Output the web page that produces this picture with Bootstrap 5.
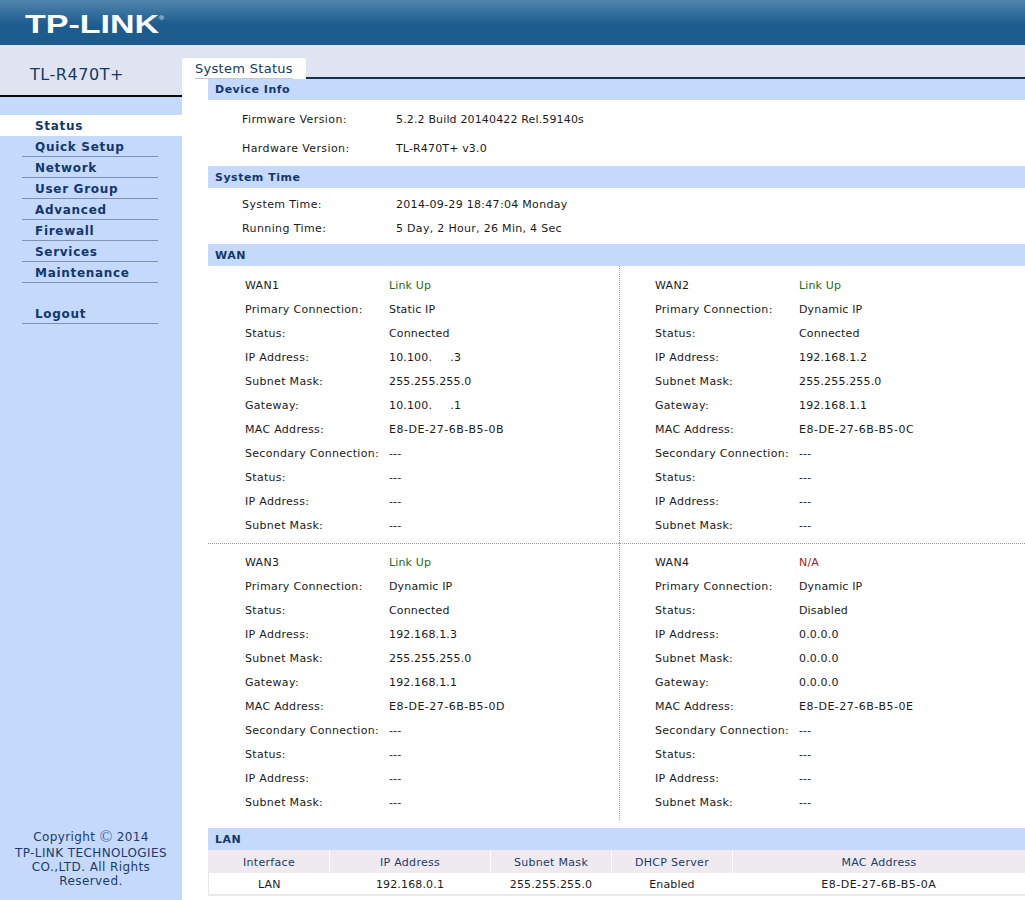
<!DOCTYPE html>
<html lang="en">
<head>
<meta charset="utf-8">
<title>TP-LINK TL-R470T+</title>
<link href="https://cdn.jsdelivr.net/npm/bootstrap@5.3.0/dist/css/bootstrap.min.css" rel="stylesheet">
<style>
html, body { height: 900px; overflow: hidden; }
body { font-family: "DejaVu Sans", Verdana, sans-serif; font-size: 11px; line-height: 14px; letter-spacing: .15px; color: #1a1a1a; background: #fff; }
.top-bar { height: 45px; background: linear-gradient(#5085ae, #1c5c8e 55%, #1d5b8d); padding: 11px 0 0 25px; }
.logo-word { font-family: "Liberation Sans", Arial, sans-serif; font-weight: 700; font-size: 25px; line-height: 27px; letter-spacing: 0; color: #fff; display: inline-block; transform: scaleX(1.36); transform-origin: left; }
.logo-word sup { font-size: 5px; font-weight: 400; top: -2.6em; margin-left: 0; }
.main-area { height: 855px; }
.side-panel { width: 182px; background: #c4d9fc; }
.model-box { height: 52px; background: #e0e4f0; border-bottom: 2px solid #0a0a0a; padding-top: 21px; padding-left: 30px; font-size: 16px; line-height: 18px; letter-spacing: .55px; color: #123a66; }
.menu-list { margin-top: 18px; }
.menu-item { height: 21px; line-height: 23px; margin-left: 22px; width: 136px; padding-left: 13px; font-weight: 700; font-size: 12px; letter-spacing: .7px; color: #14376b; border-bottom: 1px solid #7f93ad; text-decoration: none; display: block; }
.menu-item.is-current { background: #fff; margin-left: 0; width: 182px; padding-left: 35px; border-bottom: 0; }
.menu-gap { height: 20px; }
.copy-note { margin-top: auto; padding: 0 6px 12px; text-align: center; font-size: 12px; line-height: 14px; letter-spacing: .4px; color: #1c3a6e; }
.copy-first { margin-bottom: 2px; }
.copy-mark { font-size: 17px; line-height: 10px; font-family: "Liberation Serif", serif; color: #48689a; vertical-align: -1px; letter-spacing: 0; }
.content-pane { min-width: 0; }
.tab-strip { height: 34px; background: #e0e4f0; border-bottom: 2px solid #123050; padding-top: 13px; }
.tab-label { display: block; width: 124px; height: 21px; background: #fff; border-radius: 3px 3px 0 0; padding: 3px 0 0 13px; }
.tab-text { display: inline-block; height: 18px; font-size: 13px; line-height: 15px; letter-spacing: .3px; color: #123a66; border-bottom: 1px solid #c8c8c8; }
.section-wrap { margin-left: 26px; }
.section-bar { height: 22px; background: #c4d9fc; padding-left: 7px; line-height: 23px; font-weight: 700; color: #14376b; letter-spacing: .5px; }
.section-bar.bar-first { height: 21px; line-height: 21px; }
.info-row { display: flex; height: 24px; align-items: center; }
.info-key { flex: 0 0 154px; letter-spacing: .4px; }
.dev-rows { padding: 5px 0 3px 34px; }
.dev-rows .info-row { height: 29px; }
.time-rows { padding: 5px 0 3px 34px; }
.time-rows .info-row > span:last-child { letter-spacing: .3px; }
.wan-grid { display: grid; grid-template-columns: 411px 1fr; }
.wan-cell { padding: 8px 0 0 37px; height: 277px; }
.wan-cell.cell-right { border-left: 1px dotted #999; padding-left: 35px; }
.wan-cell.cell-low { border-top: 1px dotted #999; padding-top: 7px; }
.wan-key { flex: 0 0 144px; white-space: nowrap; letter-spacing: .3px; }
.mac-val { letter-spacing: .5px; }
.st-up { color: #1c6b1c; }
.st-down { color: #b01818; }
.lan-gap { margin-top: 8px; }
.lan-table { width: 100%; table-layout: fixed; border-collapse: collapse; text-align: center; }
.lan-table th { font-weight: 400; letter-spacing: .3px; background: #eeeaf0; color: #1c3a6e; height: 23px; padding: 2px 0 0; border-left: 1px solid #fff; }
.lan-table th:first-child { border-left: 1px solid #eeeaf0; }
.lan-table td { height: 22px; padding: 2px 0 0; border-bottom: 2px solid #e8e8ec; }
.lan-table td:first-child { border-left: 1px solid #e8e8ec; }
</style>
</head>
<body>
<header class="top-bar"><span class="logo-word">TP-LINK<sup>®</sup></span></header>
<div class="d-flex main-area">
  <aside class="side-panel d-flex flex-column flex-shrink-0">
    <div class="model-box">TL-R470T+</div>
    <nav class="menu-list">
      <a class="menu-item is-current" href="#">Status</a>
      <a class="menu-item" href="#">Quick Setup</a>
      <a class="menu-item" href="#">Network</a>
      <a class="menu-item" href="#">User Group</a>
      <a class="menu-item" href="#">Advanced</a>
      <a class="menu-item" href="#">Firewall</a>
      <a class="menu-item" href="#">Services</a>
      <a class="menu-item" href="#">Maintenance</a>
      <div class="menu-gap"></div>
      <a class="menu-item" href="#">Logout</a>
    </nav>
    <div class="copy-note"><div class="copy-first">Copyright <span class="copy-mark">©</span> 2014</div>TP-LINK TECHNOLOGIES<br>CO.,LTD. All Rights<br>Reserved.</div>
  </aside>
  <main class="content-pane flex-grow-1">
    <div class="tab-strip"><div class="tab-label"><span class="tab-text">System Status</span></div></div>
    <div class="section-wrap">
      <div class="section-bar bar-first">Device Info</div>
      <div class="dev-rows">
        <div class="info-row"><span class="info-key">Firmware Version:</span><span>5.2.2 Build 20140422 Rel.59140s</span></div>
        <div class="info-row"><span class="info-key">Hardware Version:</span><span>TL-R470T+ v3.0</span></div>
      </div>
      <div class="section-bar">System Time</div>
      <div class="time-rows">
        <div class="info-row"><span class="info-key">System Time:</span><span>2014-09-29 18:47:04 Monday</span></div>
        <div class="info-row"><span class="info-key">Running Time:</span><span>5 Day, 2 Hour, 26 Min, 4 Sec</span></div>
      </div>
      <div class="section-bar">WAN</div>
      <div class="wan-grid">
        <div class="wan-cell">
          <div class="info-row"><span class="wan-key">WAN1</span><span class="st-up">Link Up</span></div>
          <div class="info-row"><span class="wan-key">Primary Connection:</span><span>Static IP</span></div>
          <div class="info-row"><span class="wan-key">Status:</span><span>Connected</span></div>
          <div class="info-row"><span class="wan-key">IP Address:</span><span>10.100.&nbsp;&nbsp;&nbsp;&nbsp;&nbsp;.3</span></div>
          <div class="info-row"><span class="wan-key">Subnet Mask:</span><span>255.255.255.0</span></div>
          <div class="info-row"><span class="wan-key">Gateway:</span><span>10.100.&nbsp;&nbsp;&nbsp;&nbsp;&nbsp;.1</span></div>
          <div class="info-row"><span class="wan-key">MAC Address:</span><span class="mac-val">E8-DE-27-6B-B5-0B</span></div>
          <div class="info-row"><span class="wan-key">Secondary Connection:</span><span>---</span></div>
          <div class="info-row"><span class="wan-key">Status:</span><span>---</span></div>
          <div class="info-row"><span class="wan-key">IP Address:</span><span>---</span></div>
          <div class="info-row"><span class="wan-key">Subnet Mask:</span><span>---</span></div>
        </div>
        <div class="wan-cell cell-right">
          <div class="info-row"><span class="wan-key">WAN2</span><span class="st-up">Link Up</span></div>
          <div class="info-row"><span class="wan-key">Primary Connection:</span><span>Dynamic IP</span></div>
          <div class="info-row"><span class="wan-key">Status:</span><span>Connected</span></div>
          <div class="info-row"><span class="wan-key">IP Address:</span><span>192.168.1.2</span></div>
          <div class="info-row"><span class="wan-key">Subnet Mask:</span><span>255.255.255.0</span></div>
          <div class="info-row"><span class="wan-key">Gateway:</span><span>192.168.1.1</span></div>
          <div class="info-row"><span class="wan-key">MAC Address:</span><span class="mac-val">E8-DE-27-6B-B5-0C</span></div>
          <div class="info-row"><span class="wan-key">Secondary Connection:</span><span>---</span></div>
          <div class="info-row"><span class="wan-key">Status:</span><span>---</span></div>
          <div class="info-row"><span class="wan-key">IP Address:</span><span>---</span></div>
          <div class="info-row"><span class="wan-key">Subnet Mask:</span><span>---</span></div>
        </div>
        <div class="wan-cell cell-low">
          <div class="info-row"><span class="wan-key">WAN3</span><span class="st-up">Link Up</span></div>
          <div class="info-row"><span class="wan-key">Primary Connection:</span><span>Dynamic IP</span></div>
          <div class="info-row"><span class="wan-key">Status:</span><span>Connected</span></div>
          <div class="info-row"><span class="wan-key">IP Address:</span><span>192.168.1.3</span></div>
          <div class="info-row"><span class="wan-key">Subnet Mask:</span><span>255.255.255.0</span></div>
          <div class="info-row"><span class="wan-key">Gateway:</span><span>192.168.1.1</span></div>
          <div class="info-row"><span class="wan-key">MAC Address:</span><span class="mac-val">E8-DE-27-6B-B5-0D</span></div>
          <div class="info-row"><span class="wan-key">Secondary Connection:</span><span>---</span></div>
          <div class="info-row"><span class="wan-key">Status:</span><span>---</span></div>
          <div class="info-row"><span class="wan-key">IP Address:</span><span>---</span></div>
          <div class="info-row"><span class="wan-key">Subnet Mask:</span><span>---</span></div>
        </div>
        <div class="wan-cell cell-right cell-low">
          <div class="info-row"><span class="wan-key">WAN4</span><span class="st-down">N/A</span></div>
          <div class="info-row"><span class="wan-key">Primary Connection:</span><span>Dynamic IP</span></div>
          <div class="info-row"><span class="wan-key">Status:</span><span>Disabled</span></div>
          <div class="info-row"><span class="wan-key">IP Address:</span><span>0.0.0.0</span></div>
          <div class="info-row"><span class="wan-key">Subnet Mask:</span><span>0.0.0.0</span></div>
          <div class="info-row"><span class="wan-key">Gateway:</span><span>0.0.0.0</span></div>
          <div class="info-row"><span class="wan-key">MAC Address:</span><span class="mac-val">E8-DE-27-6B-B5-0E</span></div>
          <div class="info-row"><span class="wan-key">Secondary Connection:</span><span>---</span></div>
          <div class="info-row"><span class="wan-key">Status:</span><span>---</span></div>
          <div class="info-row"><span class="wan-key">IP Address:</span><span>---</span></div>
          <div class="info-row"><span class="wan-key">Subnet Mask:</span><span>---</span></div>
        </div>
      </div>
      <div class="section-bar lan-gap">LAN</div>
      <table class="lan-table">
        <colgroup><col style="width:121px"><col style="width:161px"><col style="width:121px"><col style="width:121px"><col></colgroup>
        <thead><tr><th>Interface</th><th>IP Address</th><th>Subnet Mask</th><th>DHCP Server</th><th>MAC Address</th></tr></thead>
        <tbody><tr><td>LAN</td><td>192.168.0.1</td><td>255.255.255.0</td><td>Enabled</td><td class="mac-val">E8-DE-27-6B-B5-0A</td></tr></tbody>
      </table>
    </div>
  </main>
</div>
</body>
</html>
